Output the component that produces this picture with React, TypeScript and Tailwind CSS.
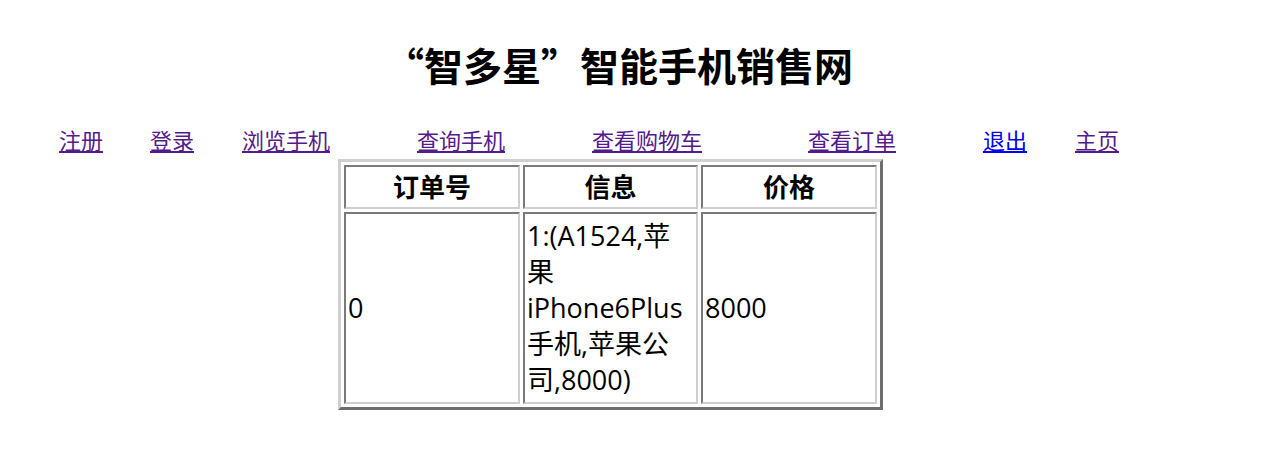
import React from "react";

const links = [
  { label: "注册", w: "w-[91px]", visited: true },
  { label: "登录", w: "w-[92px]", visited: true },
  { label: "浏览手机", w: "w-[175px]", visited: true },
  { label: "查询手机", w: "w-[175px]", visited: true },
  { label: "查看购物车", w: "w-[216px]", visited: true },
  { label: "查看订单", w: "w-[175px]", visited: true },
  { label: "退出", w: "w-[92px]", visited: false },
  { label: "主页", w: "w-[92px]", visited: true },
];

const cell =
  "border-2 border-t-[#7a7a7a] border-l-[#7a7a7a] border-b-[#cfcfcf] border-r-[#cfcfcf] p-0";

export default function App() {
  return (
    <div
      className="w-[1272px] h-[472px] bg-white text-black"
      style={{ fontFamily: '"Open Sans", "Noto Sans CJK SC", sans-serif' }}
    >
      <h1
        className="pt-[36px] pl-[385px] text-[39px] leading-[56px] font-bold"
        style={{ fontFamily: '"Noto Sans CJK SC", sans-serif' }}
      >
        “智多星”智能手机销售网
      </h1>

      <div
        className="mt-[32px] flex pl-[59px] text-[22px] leading-[30px]"
        style={{ fontFamily: '"Noto Sans CJK SC", sans-serif' }}
      >
        {links.map((l) => (
          <div key={l.label} className={l.w}>
            <a
              href="#"
              className={`underline ${l.visited ? "text-[#551a8b]" : "text-[#0000ee]"}`}
            >
              {l.label}
            </a>
          </div>
        ))}
      </div>

      <table className="ml-[338px] mt-[5px] border-separate border-spacing-[3px] border-[3px] border-t-[#d0d0d0] border-l-[#d0d0d0] border-b-[#6e6e6e] border-r-[#6e6e6e] text-[27px] leading-[36px]">
        <thead>
          <tr>
            <th className={`${cell} w-[176px] h-[44px] font-bold text-[26px]`}>订单号</th>
            <th className={`${cell} w-[175px] h-[44px] font-bold text-[26px]`}>信息</th>
            <th className={`${cell} w-[176px] h-[44px] font-bold text-[26px]`}>价格</th>
          </tr>
        </thead>
        <tbody>
          <tr>
            <td className={`${cell} h-[192px] text-left pl-[2px]`}>0</td>
            <td className={`${cell} h-[192px] text-left pl-[2px]`}>
              1:(A1524,苹<br />果<br />iPhone6Plus<br />手机,苹果公<br />司,8000)
            </td>
            <td className={`${cell} h-[192px] text-left pl-[2px]`}>8000</td>
          </tr>
        </tbody>
      </table>
    </div>
  );
}
